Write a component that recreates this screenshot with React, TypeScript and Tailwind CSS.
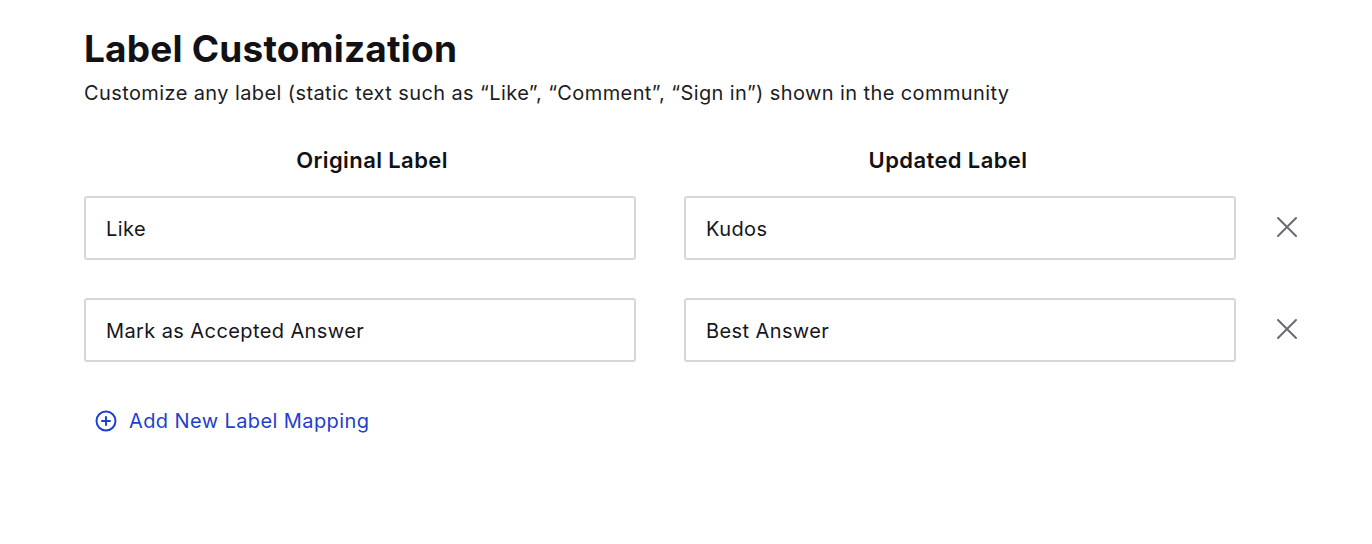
import { useState } from "react";

type Mapping = { id: number; original: string; updated: string };

const initialMappings: Mapping[] = [
  { id: 1, original: "Like", updated: "Kudos" },
  { id: 2, original: "Mark as Accepted Answer", updated: "Best Answer" },
];

function CloseIcon() {
  return (
    <svg width="22" height="22" viewBox="0 0 22 22" fill="none" stroke="currentColor" strokeWidth="2" strokeLinecap="round">
      <path d="M2 2L20 20M20 2L2 20" />
    </svg>
  );
}

function PlusCircleIcon() {
  return (
    <svg width="22" height="22" viewBox="0 0 22 22" fill="none" stroke="currentColor" strokeWidth="2" strokeLinecap="round">
      <circle cx="11" cy="11" r="9.5" />
      <path d="M11 7v8M7 11h8" />
    </svg>
  );
}

export default function App() {
  const [mappings, setMappings] = useState<Mapping[]>(initialMappings);

  const update = (id: number, key: "original" | "updated", value: string) =>
    setMappings((rows) => rows.map((r) => (r.id === id ? { ...r, [key]: value } : r)));

  const inputClass =
    "h-[64px] w-[552px] shrink-0 rounded-[3px] border-2 border-[#d6d6da] px-[20px] pt-[2px] text-[20px] tracking-[0.4px] text-[#16161b] outline-none";

  return (
    <div className="min-h-screen bg-white font-['Inter',sans-serif] text-[#111116]">
      <div className="px-[84px] pt-[26px]">
        <h1 className="text-[37px] font-bold leading-[46px] tracking-[0.2px]">Label Customization</h1>
        <p className="mt-[9px] text-[20px] leading-[24px] tracking-[0.4px] text-[#1c1c22]">
          Customize any label (static text such as “Like”, “Comment”, “Sign in”) shown in the community
        </p>

        <div className="mt-[42px] grid w-[1152px] grid-cols-2 text-[22px] font-semibold leading-[26px] tracking-[0.4px]">
          <div className="text-center">Original Label</div>
          <div className="text-center">Updated Label</div>
        </div>

        <div className="mt-[23px] flex flex-col gap-[38px]">
          {mappings.map((m) => (
            <div key={m.id} className="flex items-center">
              <input
                value={m.original}
                onChange={(e) => update(m.id, "original", e.target.value)}
                className={inputClass}
              />
              <input
                value={m.updated}
                onChange={(e) => update(m.id, "updated", e.target.value)}
                className={"ml-[48px] " + inputClass}
              />
              <button
                type="button"
                onClick={() => setMappings((rows) => rows.filter((r) => r.id !== m.id))}
                className="ml-[40px] -mt-[3px] shrink-0 text-[#6a6a72]"
                aria-label="Remove mapping"
              >
                <CloseIcon />
              </button>
            </div>
          ))}
        </div>

        <button
          type="button"
          onClick={() =>
            setMappings((rows) => [...rows, { id: Date.now(), original: "", updated: "" }])
          }
          className="mt-[46px] ml-[11px] flex items-center gap-[12px] text-[20px] leading-[26px] tracking-[0.4px] text-[#1f3fcf]"
        >
          <PlusCircleIcon />
          Add New Label Mapping
        </button>
      </div>
    </div>
  );
}
